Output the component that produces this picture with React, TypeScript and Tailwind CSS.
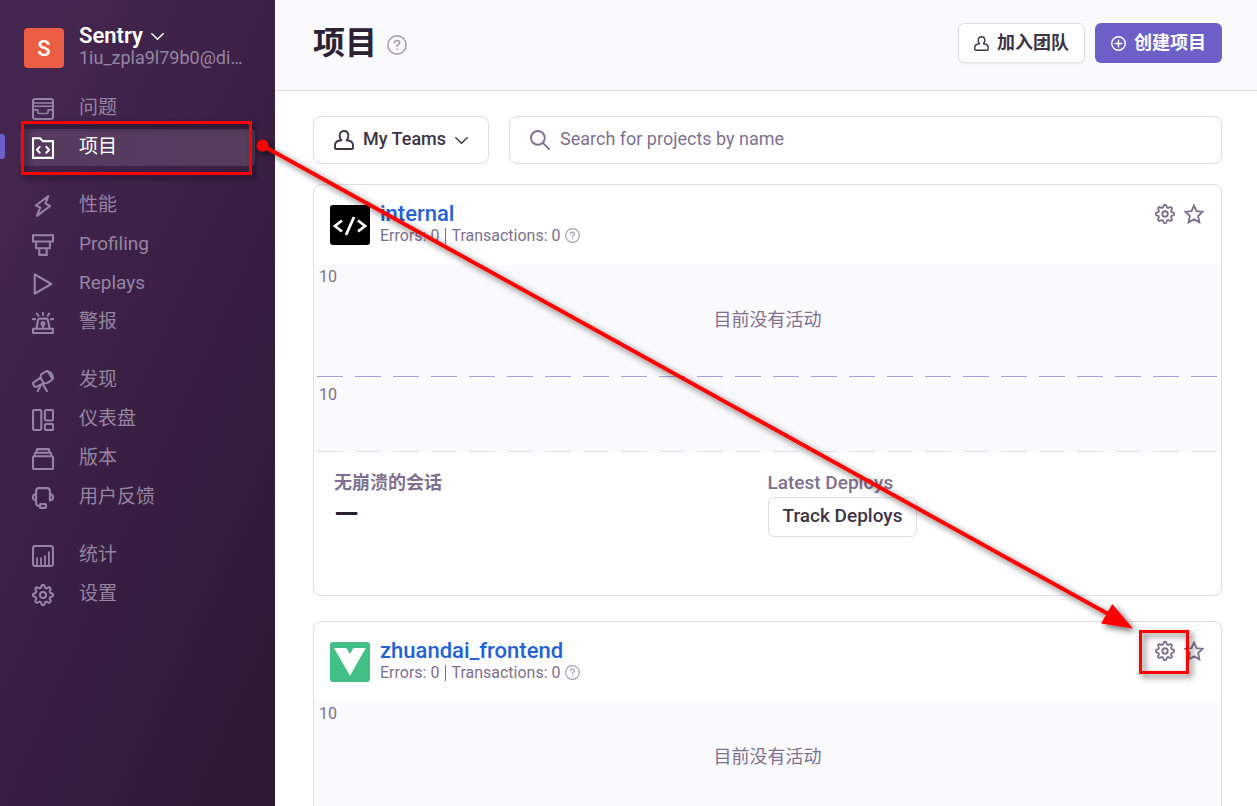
import React from "react";

type IconProps = { className?: string; children?: React.ReactNode };

function Icon({ className = "size-[22px]", children }: IconProps) {
  return (
    <svg
      viewBox="0 0 16 16"
      className={`shrink-0 ${className}`}
      fill="none"
      stroke="currentColor"
      strokeWidth="1.5"
      strokeLinecap="round"
      strokeLinejoin="round"
      aria-hidden="true"
    >
      {children}
    </svg>
  );
}

const gearPath = (() => {
  const points: string[] = [];
  for (let i = 0; i < 144; i++) {
    const a = (i / 144) * Math.PI * 2;
    const wave = Math.max(-1, Math.min(1, 1.5 * Math.cos(8 * a)));
    const r = 6.35 + 0.9 * wave;
    points.push(`${(8 + r * Math.sin(a)).toFixed(2)} ${(8 - r * Math.cos(a)).toFixed(2)}`);
  }
  return `M${points.join("L")}Z`;
})();

const IssuesIcon = () => (
  <Icon>
    <rect x="0.75" y="0.75" width="14.5" height="14.5" rx="1.6" />
    <path d="M0.75 3.6H15.25M0.75 6H15.25M0.75 8.6H4.3V10.3Q4.3 11.3 5.3 11.3H10.7Q11.7 11.3 11.7 10.3V8.6H15.25" strokeWidth="1.2" />
  </Icon>
);
const ProjectIcon = () => (
  <Icon>
    <path d="M0.75 0.9H5.9L8 3H15.25V15.2H0.75Z" strokeLinejoin="miter" />
    <path d="M5.6 7.2L3.6 9.3L5.6 11.4M10.4 7.2L12.4 9.3L10.4 11.4" />
  </Icon>
);
const LightningIcon = () => (
  <Icon>
    <path d="M11.8 0.8L2.8 7.6L6 9.2L3.6 15.2L13.2 8L9.8 6.3Z" />
  </Icon>
);
const ProfilingIcon = () => (
  <Icon>
    <path d="M0.75 0.9H15.25V5.4H0.75ZM3 5.4H13V10.3H3ZM5.3 10.3H10.7V15.2H5.3Z" strokeLinejoin="miter" />
  </Icon>
);
const PlayIcon = () => (
  <Icon>
    <path d="M2 1L14 8L2 15Z" />
  </Icon>
);
const SirenIcon = () => (
  <Icon>
    <path d="M0.8 12.2H15.2V15.3H0.8ZM3.2 12.2L4.4 5.8Q4.6 4.8 5.6 4.8H10.4Q11.4 4.8 11.6 5.8L12.8 12.2" />
    <path d="M8 0.6V2.2M3.6 1.2L4.6 2.7M12.4 1.2L11.4 2.7M0.7 5.2H2.2M15.3 5.2H13.8" />
    <circle cx="8" cy="8.4" r="1.1" />
    <path d="M8 9.6V12" />
  </Icon>
);
const TelescopeIcon = () => (
  <Icon>
    <path d="M1 9.2L6.2 5.6L8.6 9.6L3 12.3Q2.2 12.6 1.7 11.9L0.9 10.4Q0.5 9.6 1 9.2Z" />
    <path d="M6.2 5.4L6.6 3.2L10.2 1Q11.2 0.4 11.8 1.3L14.6 5.9Q15 6.8 14.2 7.4L11 9.6L8.6 9.6" />
    <path d="M11.6 1.3L13.2 1.6Q15.4 3.4 15.2 6.2" />
    <path d="M6.4 11L4.2 15.3M8 10.4L10.8 15.3" />
  </Icon>
);
const DashboardIcon = () => (
  <Icon>
    <rect x="0.75" y="0.75" width="6" height="14.5" rx="0.8" />
    <rect x="9.4" y="0.75" width="5.9" height="7.6" rx="0.8" />
    <rect x="9.4" y="10.9" width="5.9" height="4.4" rx="0.8" />
  </Icon>
);
const ReleasesIcon = () => (
  <Icon>
    <rect x="0.75" y="6" width="14.5" height="9.3" rx="0.8" />
    <path d="M2 5.8V4.2Q2 3.4 2.8 3.4H13.2Q14 3.4 14 4.2V5.8M3.4 3.2V1.5Q3.4 0.8 4.1 0.8H11.9Q12.6 0.8 12.6 1.5V3.2" />
  </Icon>
);
const SupportIcon = () => (
  <Icon>
    <path d="M3 5.2V2.8Q3 0.8 5 0.8H11Q13 0.8 13 2.8V9.6M3 5.2V11.6Q3 13.8 5.6 13.8" />
    <path d="M3 5.2H2.2Q0.7 5.6 0.7 7.4Q0.7 9.3 2.2 9.7H3M13 5.2H13.8Q15.3 5.6 15.3 7.4Q15.3 9.3 13.8 9.7H13" />
    <rect x="5.8" y="12.3" width="4.4" height="2.9" rx="0.6" />
  </Icon>
);
const StatsIcon = () => (
  <Icon>
    <rect x="0.75" y="0.75" width="14.5" height="14.5" rx="1.6" />
    <path d="M3.7 9V15M6.6 9V15M9.5 7.6V15M12.3 4.8V15" strokeWidth="1.3" strokeLinecap="butt" />
  </Icon>
);
const SettingsIcon = ({ className }: { className?: string }) => (
  <Icon className={className}>
    <path d={gearPath} />
    <circle cx="8" cy="8" r="2.2" />
  </Icon>
);
const UserIcon = ({ className }: { className?: string }) => (
  <Icon className={className}>
    <path d="M5.9 8.2C4.9 7.2 4.5 6 4.5 4.6C4.5 2.3 5.8 0.8 8 0.8C10.2 0.8 11.5 2.3 11.5 4.6C11.5 6 11.1 7.2 10.1 8.2C13.4 8.4 15.2 9.9 15.2 12.4V13.9Q15.2 15.2 13.9 15.2H2.1Q0.8 15.2 0.8 13.9V12.4C0.8 9.9 2.6 8.4 5.9 8.2Z" />
  </Icon>
);
const ChevronIcon = () => (
  <Icon className="size-[13px]">
    <path d="M1 4.5L8 11.5L15 4.5" strokeWidth="1.8" />
  </Icon>
);
const HelpIcon = ({ className }: { className?: string }) => (
  <Icon className={className}>
    <circle cx="8" cy="8" r="7.3" strokeWidth="1.3" />
    <path d="M5.9 6.2Q6 4.4 8 4.4Q10.1 4.5 10.1 6.2Q10.1 7.2 8.9 7.8Q8 8.2 8 9.2M8 11.3V11.5" strokeWidth="1.3" />
  </Icon>
);
const AddIcon = () => (
  <Icon className="size-[15px]">
    <circle cx="8" cy="8" r="7.2" />
    <path d="M8 4.4V11.6M4.4 8H11.6" />
  </Icon>
);
const SearchIcon = () => (
  <Icon className="size-5">
    <circle cx="6.3" cy="6.3" r="5.5" />
    <path d="M10.3 10.3L15.2 15.2" />
  </Icon>
);
const StarIcon = () => (
  <Icon className="size-5">
    <path d="M8 1.3L10 5.7L14.9 6.2L11.3 9.6L12.3 14.7L8 12.3L3.7 14.7L4.7 9.6L1.1 6.2L6 5.7Z" strokeLinejoin="miter" />
  </Icon>
);

type NavItem = { label: string; icon: () => React.ReactElement; active?: boolean };

const navGroups: NavItem[][] = [
  [
    { label: "问题", icon: IssuesIcon },
    { label: "项目", icon: ProjectIcon, active: true },
  ],
  [
    { label: "性能", icon: LightningIcon },
    { label: "Profiling", icon: ProfilingIcon },
    { label: "Replays", icon: PlayIcon },
    { label: "警报", icon: SirenIcon },
  ],
  [
    { label: "发现", icon: TelescopeIcon },
    { label: "仪表盘", icon: DashboardIcon },
    { label: "版本", icon: ReleasesIcon },
    { label: "用户反馈", icon: SupportIcon },
  ],
  [
    { label: "统计", icon: StatsIcon },
    { label: "设置", icon: SettingsIcon },
  ],
];

function NavLink({ label, icon: Glyph, active }: NavItem) {
  return (
    <li className="relative px-5 py-px">
      {active && <span className="absolute left-0 top-[6px] h-[25px] w-[5px] rounded-r-[3px] bg-[#6c5fc7]" />}
      <a
        href="#"
        aria-current={active ? "page" : undefined}
        className={
          active
            ? "flex h-[37px] items-center gap-[25px] rounded bg-linear-to-r from-[#553a5e] to-[#563d5d] pl-3 text-white"
            : "flex h-[37px] items-center gap-[25px] rounded pl-3 text-[#9585a3]"
        }
      >
        <Glyph />
        <span className="pb-px text-[19px] leading-6">{label}</span>
      </a>
    </li>
  );
}

function Sidebar() {
  return (
    <aside className="w-[275px] shrink-0 bg-[linear-gradient(294deg,#2f1937_12%,#452650_92%)]">
      <div className="flex h-[89px] items-center gap-[15px] pl-6 pt-[7px]">
        <span className="flex size-10 items-center justify-center rounded bg-[#ec5e44] text-[22px] font-medium text-white">S</span>
        <div className="pb-[2px]">
          <button type="button" className="flex items-center gap-2 text-[22px] leading-[22px] font-semibold text-white">
            Sentry
            <ChevronIcon />
          </button>
          <p className="text-lg leading-[22px] text-[#9585a3]">1iu_zpla9l79b0@di…</p>
        </div>
      </div>
      <nav className="flex flex-col gap-[19px]">
        {navGroups.map((group) => (
          <ul key={group[0].label}>
            {group.map((item) => (
              <NavLink key={item.label} {...item} />
            ))}
          </ul>
        ))}
      </nav>
    </aside>
  );
}

const CodeLogo = () => (
  <svg viewBox="0 0 40 40" className="size-10 shrink-0" aria-hidden="true">
    <rect width="40" height="40" rx="3" />
    <path d="M12 15.5L5 21L12 26.5M28 15.5L35 21L28 26.5M24 12L16 30" fill="none" stroke="#fff" strokeWidth="2.8" />
  </svg>
);

const VueLogo = () => (
  <svg viewBox="0 0 40 40" className="size-10 shrink-0" aria-hidden="true">
    <rect width="40" height="40" rx="3" fill="#42c088" />
    <path d="M4 6H16.3L20 12L23.5 6H35.8L20 33.8Z" fill="#fff" />
  </svg>
);

function DashedLine({ className }: { className: string }) {
  return (
    <svg className={`block h-px w-full ${className}`} aria-hidden="true">
      <line x1="3" y1="0.5" x2="100%" y2="0.5" stroke="currentColor" strokeDasharray="26 12" />
    </svg>
  );
}

function ProjectStats() {
  return (
    <>
      <div className="bg-[#faf9fb] text-base text-[#80708f]">
        <DashedLine className="text-[#a79de0]" />
        <p className="h-[74px] px-[5px] pt-[6px] leading-6">10</p>
        <DashedLine className="text-[#e0dfe3]" />
      </div>
      <div className="grid min-h-[143px] grid-cols-2 px-5 pt-[19px]">
        <div>
          <h3 className="text-lg leading-6 font-bold text-[#80708f]">无崩溃的会话</h3>
          <p className="pt-[3px] text-[32px] leading-8 font-medium text-[#2b2233]">—</p>
        </div>
        <div>
          <h3 className="text-[19px] leading-6 font-medium text-[#80708f]">Latest Deploys</h3>
          <button type="button" className="mt-[2px] h-10 rounded-md border border-[#e0dce5] px-[14px] pb-[2px] text-[19px] leading-6 font-medium text-[#3e3446]">
            Track Deploys
          </button>
        </div>
      </div>
    </>
  );
}

function ProjectCard({ name, logo, children }: { name: string; logo: React.ReactNode; children?: React.ReactNode }) {
  return (
    <article className="overflow-hidden rounded-lg border border-[#e0dce5] bg-white">
      <header className="flex h-20 items-center gap-[10px] pl-4 pr-[17px]">
        {logo}
        <div className="flex-1 pb-[3px]">
          <h2 className="text-[22px] leading-6 font-medium">
            <a href="#" className="text-[#2562d4]">{name}</a>
          </h2>
          <p className="flex items-center text-base leading-5 text-[#80708f]">
            <span className="border-r border-[#80708f] pr-[6px] leading-4">Errors: 0</span>
            <span className="pl-[5px] pr-1">Transactions: 0</span>
            <span className="text-[#a99fb3]"><HelpIcon className="size-[15px]" /></span>
          </p>
        </div>
        <div className="flex gap-[9px] self-start pt-[19px] text-[#80708f]">
          <button type="button" aria-label="设置"><SettingsIcon className="size-5" /></button>
          <button type="button" aria-label="收藏"><StarIcon /></button>
        </div>
      </header>
      <div className="h-[111px] bg-[#faf9fb] px-[5px] text-base text-[#80708f]">
        <p className="leading-6">10</p>
        <p className="pt-[19px] text-center text-lg leading-6">目前没有活动</p>
      </div>
      {children}
    </article>
  );
}

function Annotations() {
  return (
    <svg className="pointer-events-none absolute left-0 top-0 h-[806px] w-[1257px]" viewBox="0 0 1257 806" aria-hidden="true">
      <defs>
        <filter id="drop" x="-10%" y="-20%" width="130%" height="150%">
          <feDropShadow dx="3" dy="3" stdDeviation="3" floodColor="#000" floodOpacity="0.6" />
        </filter>
      </defs>
      <g fill="none" stroke="#f00" strokeWidth="3">
        <rect x="22.5" y="122.5" width="228" height="51" filter="url(#drop)" />
        <rect x="1140.5" y="631.5" width="47" height="41" filter="url(#drop)" />
      </g>
      <g filter="url(#drop)">
        <path d="M262.5 145.5L1110 615" stroke="#f00" strokeWidth="4" />
        <circle cx="262.5" cy="145.5" r="6" fill="#f00" />
        <path d="M1133 628.5L1112.3 604L1101 623.5Z" fill="#f00" />
      </g>
    </svg>
  );
}

export default function App() {
  return (
    <div className="relative flex h-screen overflow-hidden bg-white font-[Roboto,'Noto_Sans_CJK_SC',sans-serif]">
      <Sidebar />
      <main className="min-w-0 flex-1">
        <header className="flex h-[91px] items-center justify-between border-b border-[#e0dce5] bg-[#faf9fb] pb-1 pl-[38px] pr-[35px]">
          <div className="flex items-center gap-[10px]">
            <h1 className="text-[32px] leading-10 font-bold text-[#2b2233]">项目</h1>
            <span className="pt-1 text-[#a99fb3]"><HelpIcon className="size-5" /></span>
          </div>
          <div className="flex gap-[10px]">
            <button type="button" className="flex h-10 items-center gap-2 rounded-md border border-[#e0dce5] bg-white px-[15px] text-lg font-bold text-[#3e3446] shadow-xs">
              <UserIcon className="size-[15px]" />
              加入团队
            </button>
            <button type="button" className="flex h-10 items-center gap-2 rounded-md bg-[#6c5fc7] px-4 text-lg font-bold text-white">
              <AddIcon />
              创建项目
            </button>
          </div>
        </header>
        <div className="flex flex-col gap-5 pl-[38px] pr-[35px] pt-[25px]">
          <div className="flex gap-5">
            <button type="button" aria-haspopup="listbox" className="flex h-12 w-44 items-center gap-[9px] rounded-lg border border-[#e0dce5] pl-5 text-lg font-medium text-[#3e3446]">
              <UserIcon className="size-5" />
              <span className="pb-[2px]">My Teams</span>
              <ChevronIcon />
            </button>
            <label className="flex h-12 flex-1 items-center gap-[10px] rounded-lg border border-[#e0dce5] px-5 text-[#80708f]">
              <SearchIcon />
              <input
                type="text"
                aria-label="Search for projects by name"
                placeholder="Search for projects by name"
                className="min-w-0 flex-1 bg-transparent pb-[2px] text-lg outline-none placeholder:text-[#80708f]"
              />
            </label>
          </div>
          <div className="flex flex-col gap-[25px]">
            <ProjectCard name="internal" logo={<CodeLogo />}>
              <ProjectStats />
            </ProjectCard>
            <ProjectCard name="zhuandai_frontend" logo={<VueLogo />} />
          </div>
        </div>
      </main>
      <Annotations />
    </div>
  );
}
